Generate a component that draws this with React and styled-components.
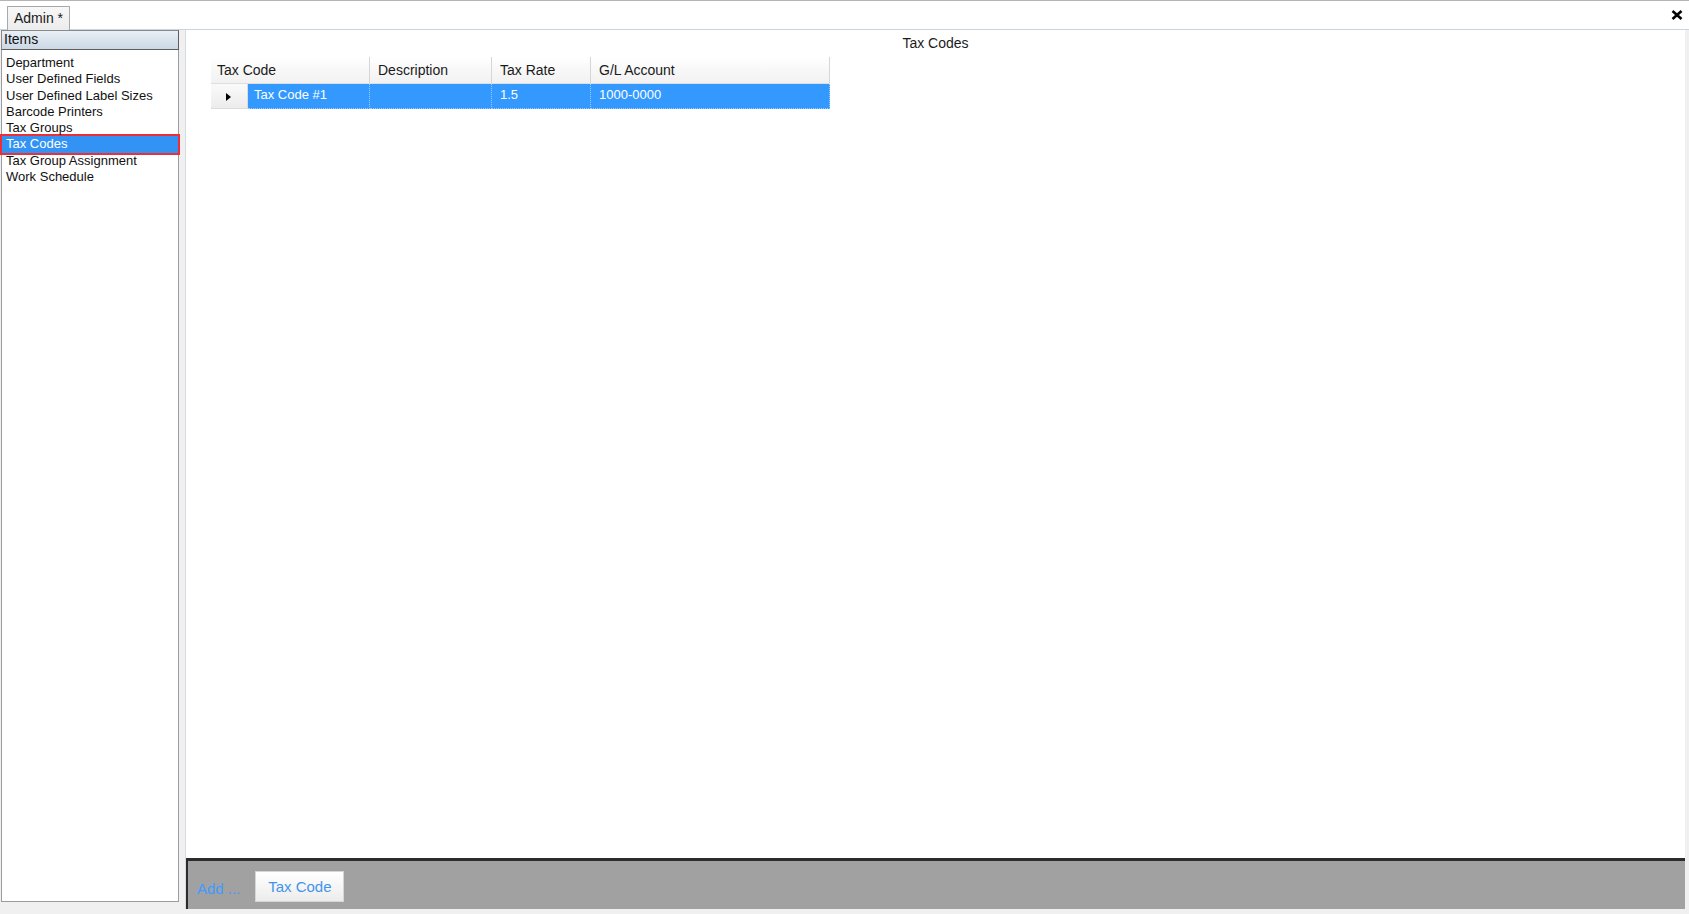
import React from 'react'
import styled, { createGlobalStyle } from 'styled-components'

const GlobalStyle = createGlobalStyle`
  html, body {
    margin: 0;
    padding: 0;
  }
  body {
    font-family: "Liberation Sans", Arial, sans-serif;
    background: #f0f0f0;
    color: #000;
  }
`

const Window = styled.div`
  width: 1689px;
  height: 914px;
  display: flex;
  flex-direction: column;
  background: #f0f0f0;
  overflow: hidden;
`

const TabStrip = styled.div`
  height: 30px;
  box-sizing: border-box;
  border-top: 1px solid #b4b4b4;
  border-bottom: 1px solid #c8d4e1;
  background: #fff;
  display: flex;
  align-items: flex-end;
  padding: 0 6px 0 7px;
`

const Tab = styled.div`
  height: 24px;
  box-sizing: border-box;
  padding: 0 6px 0 6px;
  margin-bottom: -1px;
  border: 1px solid #a9a9a9;
  border-bottom: none;
  background: linear-gradient(#f7f7f7, #ececec);
  font-size: 14px;
  line-height: 22px;
  color: #1a1a1a;
`

const CloseButton = styled.div`
  margin-left: auto;
  align-self: center;
  display: flex;
`

const Body = styled.div`
  flex: 1;
  display: flex;
  gap: 6px;
  padding: 0 4px 5px 1px;
  min-height: 0;
`

const Sidebar = styled.div`
  width: 178px;
  display: flex;
  flex-direction: column;
  padding-bottom: 7px;
`

const SidebarHeader = styled.div`
  height: 20px;
  box-sizing: border-box;
  border: 1px solid #8a8a8a;
  border-right-color: #5e5e5e;
  border-bottom-color: #5e5e5e;
  background: linear-gradient(#e9eff5, #cbd8e5);
  font-size: 14px;
  line-height: 17px;
  padding-left: 2px;
  color: #111;
`

const List = styled.div`
  flex: 1;
  background: #fff;
  border: 1px solid #9a9ca0;
  border-top: none;
  padding-top: 5px;
`

const ListItem = styled.div`
  height: 16.3px;
  line-height: 16px;
  padding-left: 4px;
  font-size: 13px;
  white-space: nowrap;
  color: ${p => (p.selected ? '#fff' : '#111')};
  background: ${p => (p.selected ? '#3393f5' : 'transparent')};
  box-shadow: ${p => (p.selected ? '0 0 0 2px #ec2f37' : 'none')};
`

const Main = styled.div`
  flex: 1;
  display: flex;
  flex-direction: column;
  background: #fff;
  border-left: 1px solid #d5dae0;
`

const Title = styled.div`
  margin-top: 5px;
  text-align: center;
  font-size: 14px;
  line-height: 16px;
  color: #1c1c1c;
`

const Grid = styled.div`
  margin: 6px 0 0 25px;
  width: 619px;
`

const HeaderRow = styled.div`
  display: flex;
  height: 27px;
  background: linear-gradient(#ffffff, #f1f1f1);
  border-bottom: 1px solid #dedede;
  box-sizing: border-box;
`

const HeaderCell = styled.div`
  width: ${p => p.w}px;
  box-sizing: border-box;
  padding-left: ${p => p.pad}px;
  border-right: 1px solid #d6d6d6;
  font-size: 14px;
  line-height: 26px;
  color: #1a1a1a;
`

const DataRow = styled.div`
  display: flex;
  height: 25px;
`

const RowHeader = styled.div`
  width: 37px;
  box-sizing: border-box;
  background: linear-gradient(#fafafa, #ececec);
  border-right: 1px solid #dcdcdc;
  border-bottom: 1px solid #dcdcdc;
  display: flex;
  align-items: center;
  padding-left: 15px;
`

const Arrow = styled.span`
  width: 0;
  height: 0;
  border-left: 5px solid #000;
  border-top: 4.5px solid transparent;
  border-bottom: 4.5px solid transparent;
  margin-top: 2px;
`

const DataCell = styled.div`
  width: ${p => p.w}px;
  box-sizing: border-box;
  padding-left: ${p => p.pad}px;
  background: #3399ff;
  color: #fff;
  font-size: 13px;
  line-height: 22px;
  border-right: 1px dotted rgba(255, 255, 255, 0.5);
  border-bottom: 1px dotted rgba(255, 255, 255, 0.5);
`

const Spacer = styled.div`
  flex: 1;
`

const ActionBar = styled.div`
  height: 51px;
  box-sizing: border-box;
  border-top: 3px solid #2b2b2b;
  border-left: 2px solid #2b2b2b;
  background: #a1a1a1;
  display: flex;
  align-items: center;
  padding: 3px 0 0 9px;
`

const AddLink = styled.span`
  font-size: 15px;
  color: #3f9bff;
  margin-right: 15px;
  margin-top: 4px;
`

const BarButton = styled.button`
  width: 89px;
  height: 31px;
  border: 1px solid #d6d6d6;
  background: linear-gradient(#ffffff, #ececec);
  font-family: "Liberation Sans", Arial, sans-serif;
  font-size: 15px;
  color: #4494ea;
  padding: 0;
`

const items = [
  'Department',
  'User Defined Fields',
  'User Defined Label Sizes',
  'Barcode Printers',
  'Tax Groups',
  'Tax Codes',
  'Tax Group Assignment',
  'Work Schedule'
]

const columns = [
  { title: 'Tax Code', w: 159, pad: 6 },
  { title: 'Description', w: 122, pad: 8 },
  { title: 'Tax Rate', w: 99, pad: 8 },
  { title: 'G/L Account', w: 239, pad: 8 }
]

const row = [
  { value: 'Tax Code #1', w: 122, pad: 6 },
  { value: '', w: 122, pad: 8 },
  { value: '1.5', w: 99, pad: 8 },
  { value: '1000-0000', w: 239, pad: 8 }
]

export default function App() {
  return (
    <>
      <GlobalStyle />
      <Window>
        <TabStrip>
          <Tab>Admin *</Tab>
          <CloseButton>
            <svg width="12" height="10" viewBox="0 0 12 10">
              <path d="M1.5 1 L10.5 9 M10.5 1 L1.5 9" stroke="#000" strokeWidth="2.6" />
            </svg>
          </CloseButton>
        </TabStrip>

        <Body>
          <Sidebar>
            <SidebarHeader>Items</SidebarHeader>
            <List>
              {items.map(name => (
                <ListItem key={name} selected={name === 'Tax Codes'}>{name}</ListItem>
              ))}
            </List>
          </Sidebar>

          <Main>
            <Title>Tax Codes</Title>
            <Grid>
              <HeaderRow>
                {columns.map(c => (
                  <HeaderCell key={c.title} w={c.w} pad={c.pad}>{c.title}</HeaderCell>
                ))}
              </HeaderRow>
              <DataRow>
                <RowHeader><Arrow /></RowHeader>
                {row.map((c, i) => (
                  <DataCell key={i} w={c.w} pad={c.pad}>{c.value}</DataCell>
                ))}
              </DataRow>
            </Grid>
            <Spacer />
            <ActionBar>
              <AddLink>Add ...</AddLink>
              <BarButton>Tax Code</BarButton>
            </ActionBar>
          </Main>
        </Body>
      </Window>
    </>
  )
}
